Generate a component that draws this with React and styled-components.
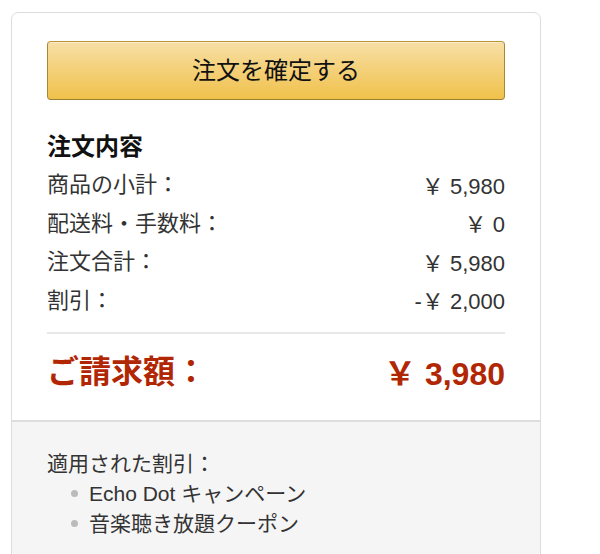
import React from "react";
import styled, { createGlobalStyle } from "styled-components";

const GlobalStyle = createGlobalStyle`
  body {
    margin: 0;
    background: #fff;
    font-family: "Liberation Sans", "Noto Sans CJK JP", sans-serif;
    color: #333;
  }
`;

const rows = [
  { label: "商品の小計：", value: "5,980" },
  { label: "配送料・手数料：", value: "0" },
  { label: "注文合計：", value: "5,980" },
  { label: "割引：", value: "2,000", minus: true },
];

const discounts = ["Echo Dot キャンペーン", "音楽聴き放題クーポン"];

export default function App() {
  return (
    <>
      <GlobalStyle />
      <Card>
        <Summary>
          <PlaceButton>注文を確定する</PlaceButton>
          <Heading>注文内容</Heading>
          {rows.map((r) => (
            <Row key={r.label}>
              <span>{r.label}</span>
              <span>
                {r.minus && "-"}
                <Yen>￥</Yen>
                {r.value}
              </span>
            </Row>
          ))}
          <Divider />
          <TotalRow>
            <span>ご請求額：</span>
            <span>
              <Yen>￥</Yen>
              3,980
            </span>
          </TotalRow>
        </Summary>
        <Applied>
          <AppliedTitle>適用された割引：</AppliedTitle>
          <DiscountList>
            {discounts.map((d) => (
              <li key={d}>{d}</li>
            ))}
          </DiscountList>
        </Applied>
      </Card>
    </>
  );
}

const Card = styled.div`
  margin: 12px 0 0 11px;
  width: 530px;
  box-sizing: border-box;
  border: 1px solid #ddd;
  border-radius: 7px;
  overflow: hidden;
`;

const Summary = styled.div`
  padding: 28px 35px 24px;
`;

const PlaceButton = styled.button`
  display: block;
  width: 100%;
  height: 59px;
  border: 1px solid;
  border-color: #b8943a #a88734 #9c7e31;
  border-radius: 4px;
  background: linear-gradient(to bottom, #f7dfa5, #f0c14b);
  box-shadow: inset 0 1px 0 rgba(255, 255, 255, 0.4);
  font-family: "Liberation Sans", "Noto Sans CJK JP", sans-serif;
  font-size: 24px;
  line-height: 1;
  color: #111;
  cursor: pointer;
`;

const Heading = styled.div`
  margin-top: 28px;
  height: 38px;
  display: flex;
  align-items: center;
  font-size: 24px;
  font-weight: bold;
  line-height: 1;
  color: #111;
`;

const Row = styled.div`
  display: flex;
  align-items: center;
  justify-content: space-between;
  height: 38.5px;
  font-size: 22px;
  line-height: 1;
  color: #333;
`;

const Yen = styled.span`
  font-family: "Noto Sans CJK JP", sans-serif;
  margin-right: 0.28em;
`;

const Divider = styled.hr`
  margin: 12px 0 14px;
  border: 0;
  border-top: 2px solid #e7e7e7;
`;

const TotalRow = styled.div`
  display: flex;
  align-items: center;
  justify-content: space-between;
  height: 48px;
  font-size: 32px;
  font-weight: bold;
  line-height: 1;
  color: #b12704;
`;

const Applied = styled.div`
  background: #f5f5f5;
  border-top: 2px solid #ddd;
  padding: 26px 35px 40px;
  font-size: 21px;
  line-height: 1;
  color: #333;
`;

const AppliedTitle = styled.div`
  height: 30px;
  display: flex;
  align-items: center;
`;

const DiscountList = styled.ul`
  margin: 0;
  padding: 0 0 0 24px;
  list-style: none;

  li {
    display: flex;
    align-items: center;
    gap: 11px;
    height: 30px;
  }

  li::before {
    content: "";
    width: 7px;
    height: 7px;
    border-radius: 50%;
    background: #bbb;
  }
`;
